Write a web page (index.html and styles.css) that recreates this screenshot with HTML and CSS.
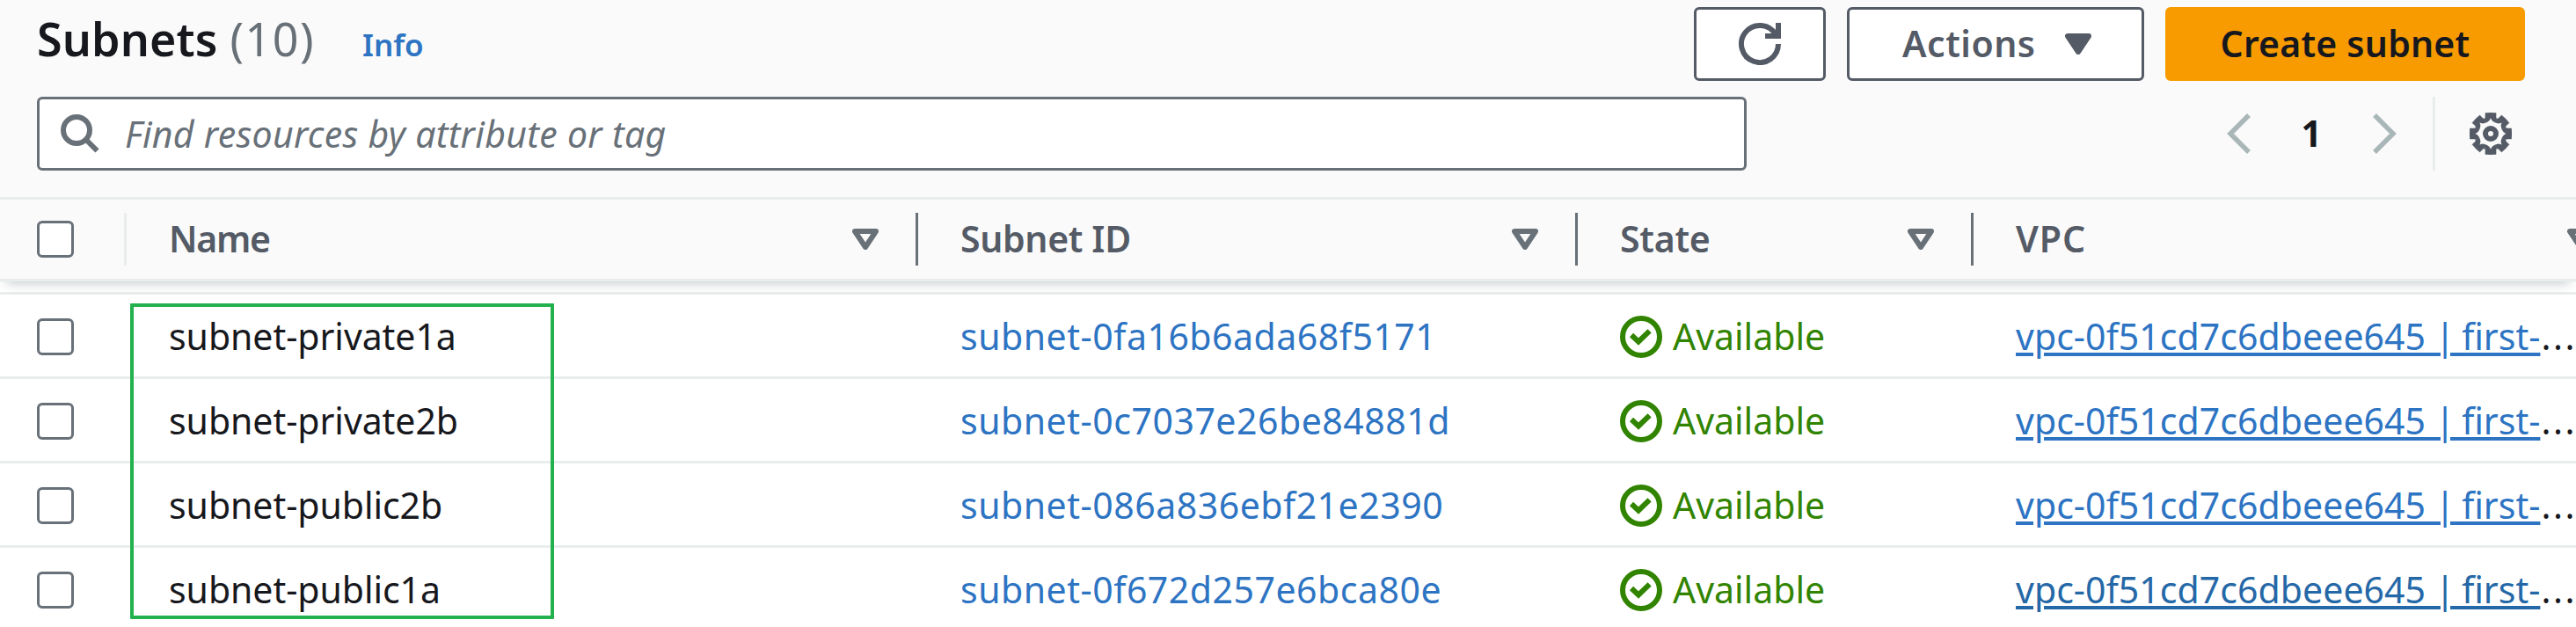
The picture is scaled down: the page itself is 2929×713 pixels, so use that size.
FILE: index.html
```html
<!DOCTYPE html>
<html lang="en">
<head>
<meta charset="utf-8">
<title>Subnets</title>
<link rel="stylesheet" href="styles.css">
</head>
<body>
<svg class="defs" width="0" height="0">
  <symbol id="sort" viewBox="0 0 30 24"><path d="M3 3H27L15 21Z" fill="none" stroke="currentColor" stroke-width="6" stroke-linejoin="round"/></symbol>
  <symbol id="ok" viewBox="0 0 48 48"><g fill="none" stroke="currentColor" stroke-width="6"><circle cx="24" cy="24" r="21"/><path d="M13 22L21 29.5L33.6 17.4"/></g></symbol>
  <symbol id="gear" viewBox="0 0 48 48">
    <g fill="currentColor" stroke="currentColor" stroke-width=".4">
      <path id="tooth" d="M17.9 .4Q24 -.4 30.1 .4L30.1 4.2Q29.6 6.4 31.1 6.9L29.3 11.2Q25.4 10 24 6Q22.6 10 18.7 11.2L16.9 6.9Q18.4 6.4 17.9 4.2Z"/>
      <use href="#tooth" transform="rotate(45 24 24)"/>
      <use href="#tooth" transform="rotate(90 24 24)"/>
      <use href="#tooth" transform="rotate(135 24 24)"/>
      <use href="#tooth" transform="rotate(180 24 24)"/>
      <use href="#tooth" transform="rotate(225 24 24)"/>
      <use href="#tooth" transform="rotate(270 24 24)"/>
      <use href="#tooth" transform="rotate(315 24 24)"/>
    </g>
    <circle cx="24" cy="24" r="6" fill="none" stroke="currentColor" stroke-width="6"/>
  </symbol>
</svg>
<main class="panel">
  <header class="header">
    <div class="toolbar">
      <div class="heading">
        <h1 class="title">Subnets</h1>
        <span class="count">(10)</span>
        <a class="info">Info</a>
      </div>
      <div class="actions">
        <button class="btn btn-refresh" aria-label="Refresh"><svg width="48" height="48" viewBox="0 0 48 48" fill="none" stroke="currentColor" stroke-width="6"><path d="M45 24A21 21 0 1 1 42 13.2"/><path d="M45 0V15H30"/></svg></button>
        <button class="btn btn-menu"><span class="btn-label">Actions</span><svg width="30" height="24" viewBox="0 0 30 24"><path d="M3 3H27L15 21Z" fill="currentColor" stroke="currentColor" stroke-width="6" stroke-linejoin="round"/></svg></button>
        <button class="btn btn-primary"><span class="btn-label">Create subnet</span></button>
      </div>
    </div>
    <div class="filters">
      <div class="search">
        <svg width="45" height="45" viewBox="0 0 45 45" fill="none" stroke="currentColor" stroke-width="6"><circle cx="18" cy="18" r="15"/><path d="M28 28L41.5 41.5"/></svg>
        <span class="placeholder">Find resources by attribute or tag</span>
      </div>
      <div class="paging">
        <svg class="chevron" width="27" height="46" viewBox="0 0 27 46"><path d="M25 2L4 23L25 44" fill="none" stroke="currentColor" stroke-width="5.5"/></svg>
        <span class="page">1</span>
        <svg class="chevron" width="27" height="46" viewBox="0 0 27 46"><path d="M2 2L23 23L2 44" fill="none" stroke="currentColor" stroke-width="5.5"/></svg>
        <span class="rule"></span>
        <svg class="settings" width="48" height="48"><use href="#gear"/></svg>
      </div>
    </div>
  </header>
  <section class="table">
    <div class="thead">
      <div class="grid">
        <div class="th th-check"><span class="checkbox"></span></div>
        <div class="th"><span class="th-label th-name">Name</span><svg width="30" height="24"><use href="#sort"/></svg></div>
        <div class="th"><span class="th-label th-id">Subnet ID</span><svg width="30" height="24"><use href="#sort"/></svg></div>
        <div class="th"><span class="th-label th-state">State</span><svg width="30" height="24"><use href="#sort"/></svg></div>
        <div class="th"><span class="th-label th-vpc">VPC</span><svg width="30" height="24"><use href="#sort"/></svg></div>
      </div>
    </div>
    <div class="tbody">
      <div class="grid row">
        <div class="td td-check"><span class="checkbox"></span></div>
        <div class="td td-name">subnet-private1a</div>
        <div class="td"><a class="link id">subnet-0fa16b6ada68f5171</a></div>
        <div class="td state"><svg width="48" height="48"><use href="#ok"/></svg><span>Available</span></div>
        <div class="td"><a class="link vpc">vpc-0f51cd7c6dbeee645 | <span class="word">first-</span></a><span class="more">...</span></div>
      </div>
      <div class="grid row">
        <div class="td td-check"><span class="checkbox"></span></div>
        <div class="td td-name">subnet-private2b</div>
        <div class="td"><a class="link id">subnet-0c7037e26be84881d</a></div>
        <div class="td state"><svg width="48" height="48"><use href="#ok"/></svg><span>Available</span></div>
        <div class="td"><a class="link vpc">vpc-0f51cd7c6dbeee645 | <span class="word">first-</span></a><span class="more">...</span></div>
      </div>
      <div class="grid row">
        <div class="td td-check"><span class="checkbox"></span></div>
        <div class="td td-name">subnet-public2b</div>
        <div class="td"><a class="link id">subnet-086a836ebf21e2390</a></div>
        <div class="td state"><svg width="48" height="48"><use href="#ok"/></svg><span>Available</span></div>
        <div class="td"><a class="link vpc">vpc-0f51cd7c6dbeee645 | <span class="word">first-</span></a><span class="more">...</span></div>
      </div>
      <div class="grid row">
        <div class="td td-check"><span class="checkbox"></span></div>
        <div class="td td-name">subnet-public1a</div>
        <div class="td"><a class="link id">subnet-0f672d257e6bca80e</a></div>
        <div class="td state"><svg width="48" height="48"><use href="#ok"/></svg><span>Available</span></div>
        <div class="td"><a class="link vpc active">vpc-0f51cd7c6dbeee645 | <span class="word">first-</span></a><span class="more">...</span></div>
      </div>
    </div>
  </section>
  <div class="highlight"></div>
</main>
</body>
</html>
```
FILE: styles.css
```css
* { box-sizing: border-box; }
html, body { margin: 0; height: 713px; overflow: hidden; }
body { background: #fff; color: #17181d; font: 41px/56px "Noto Sans", "Open Sans", sans-serif; }
svg { display: block; flex: none; }
.defs { display: none; }
.panel { position: relative; width: 2929px; height: 713px; overflow: hidden; }

.header { background: #fafafa; padding: 8px 58px 30px 42px; }
.toolbar { display: flex; justify-content: space-between; align-items: center; height: 84px; }
.heading { display: flex; align-items: baseline; padding-bottom: 5px; }
.title { margin: 0; font-size: 52px; font-weight: 600; letter-spacing: 0.1px; }
.count { margin-left: 14px; font-size: 52px; letter-spacing: 1.5px; color: #687078; }
.info { margin-left: 54px; font-size: 35px; font-weight: 600; color: #2d74c3; letter-spacing: -0.1px; }
.actions { display: flex; gap: 24px; }
.btn { display: flex; align-items: center; height: 84px; padding: 0; border: 3px solid #545b66; border-radius: 6px; background: #fff; color: #545b66; font: 600 41px/56px "Noto Sans", "Open Sans", sans-serif; }
.btn-label { padding-bottom: 3px; }
.btn-refresh { width: 150px; justify-content: center; }
.btn-menu { width: 338px; padding-left: 60px; gap: 33px; letter-spacing: 0.5px; }
.btn-primary { width: 409px; justify-content: center; border-color: #f79b00; background: #f79b00; color: #17181d; letter-spacing: 0.2px; }

.filters { display: flex; justify-content: space-between; height: 84px; margin-top: 18px; }
.search { display: flex; align-items: center; width: 1944px; padding-left: 24px; border: 3px solid #687078; border-radius: 6px; background: #fff; color: #687078; gap: 28px; }
.placeholder { font-style: italic; letter-spacing: 0.32px; }
.paging { display: flex; align-items: center; padding-right: 15px; }
.chevron { color: #aab7b8; }
.page { margin: 0 58px; font-weight: 700; padding-bottom: 3px; }
.rule { width: 3px; height: 84px; margin: 0 39px 0 41px; background: #e9eded; }
.settings { color: #545b66; }

.grid { display: grid; grid-template-columns: 144px 900px 750px 450px 750px; }
.thead { position: relative; z-index: 1; height: 96px; border-top: 3px solid #e9eded; border-bottom: 3px solid #e9eded; background: #fafafa; box-shadow: 0 9px 12px -7px rgba(0, 28, 36, 0.24); }
.th { display: flex; align-items: center; justify-content: space-between; height: 60px; margin-top: 15px; padding: 0 42px 0 48px; border-right: 3px solid #687078; color: #687078; }
.th-check { padding-left: 42px; border-right-color: #e9eded; }
.th-label { padding-bottom: 3px; font-weight: 600; color: #545b66; }
.th-name { letter-spacing: -1.3px; }
.th-id { letter-spacing: -0.35px; }
.th-state { letter-spacing: -0.25px; }
.th-vpc { letter-spacing: 0.9px; }

.tbody { margin-top: 12px; border-top: 3px solid #e9eded; }
.row { height: 96px; border-bottom: 3px solid #e9eded; }
.td { display: flex; align-items: center; padding-left: 48px; white-space: pre; }
.td-check { padding-left: 42px; }
.td-name { letter-spacing: -0.05px; }
.checkbox { width: 42px; height: 42px; border: 3px solid #687078; border-radius: 6px; background: #fff; }
.td .checkbox, .state svg { margin-top: 3px; }
.state { gap: 12px; color: #318400; }
.link { color: #2d74c3; }
.id { letter-spacing: 0.52px; }
.vpc { letter-spacing: 0.05px; text-decoration: underline; text-decoration-thickness: 4px; text-underline-offset: 3px; }
.vpc.active { color: #2568a7; }
.word { margin-left: -3px; letter-spacing: 0; }
.more { margin-left: 1px; letter-spacing: 2.5px; }

/* Annotation frame drawn over the name column */
.highlight { position: absolute; z-index: 2; left: 148px; top: 345px; width: 482px; height: 359px; border: 4px solid #22b14c; border-radius: 1px; }
```
